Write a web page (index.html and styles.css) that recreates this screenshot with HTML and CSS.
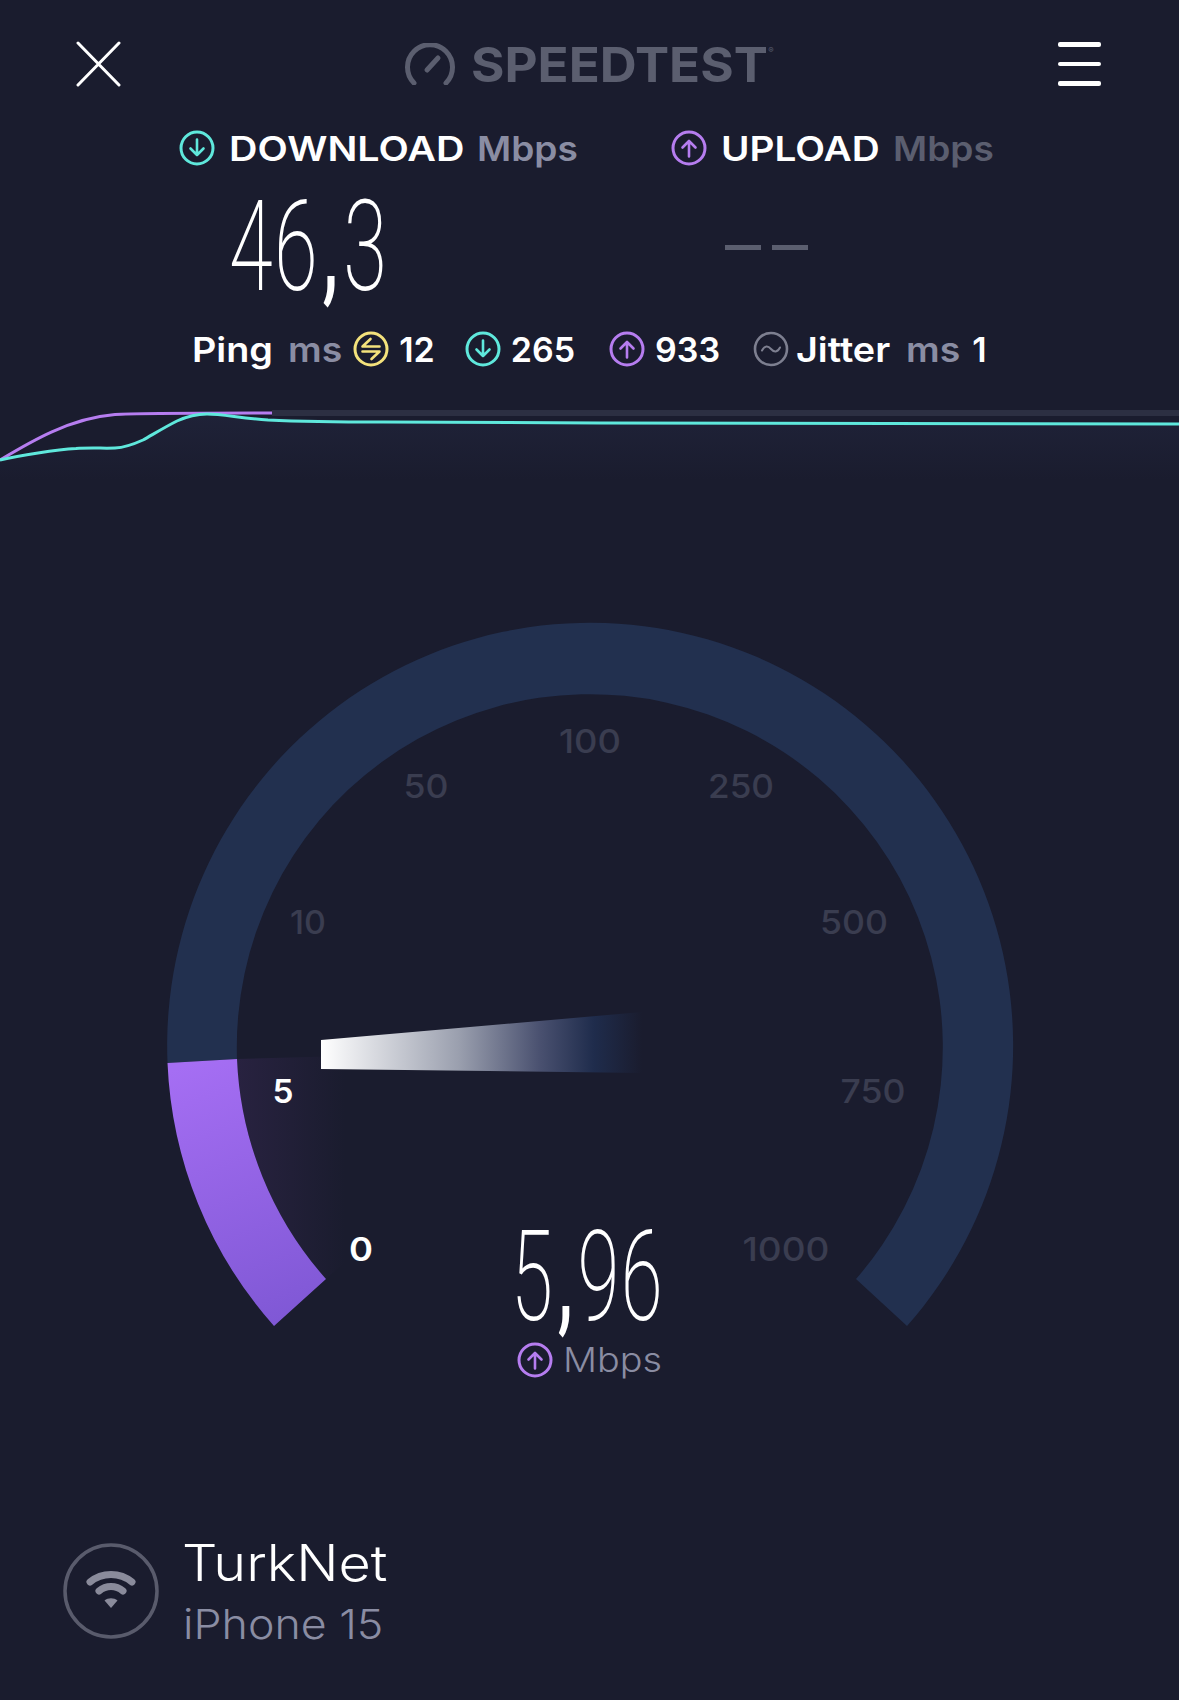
FILE: index.html
```html
<!DOCTYPE html>
<html lang="en">
  <head>
    <meta charset="UTF-8" />
    <meta name="viewport" content="width=device-width, initial-scale=1.0" />
    <title>Speedtest</title>
    <link rel="stylesheet" href="styles.css">
  </head>
  <body>
    <svg class="defs" width="0" height="0">
      <symbol id="arrow-down" viewBox="0 0 36 36">
        <circle cx="18" cy="18" r="16" fill="none" stroke="currentColor" stroke-width="3" />
        <path d="M18 9.5V25M11.5 18.5L18 25L24.5 18.5" fill="none" stroke="currentColor" stroke-width="2.6" stroke-linecap="round" stroke-linejoin="round" />
      </symbol>
      <symbol id="arrow-up" viewBox="0 0 36 36">
        <circle cx="18" cy="18" r="16" fill="none" stroke="currentColor" stroke-width="3" />
        <path d="M18 26.5V11M11.5 17.5L18 11L24.5 17.5" fill="none" stroke="currentColor" stroke-width="2.6" stroke-linecap="round" stroke-linejoin="round" />
      </symbol>
    </svg>

    <main class="screen">
      <header class="topbar">
        <svg class="close" viewBox="0 0 45 46">
          <path d="M2 2L43 44M43 2L2 44" />
        </svg>
        <div class="logo">
          <svg class="logo-mark" viewBox="0 0 50 42">
            <path d="M9 40A22.5 22.5 0 1 1 41 40" />
            <path d="M22 27L33 15" />
          </svg>
          <span class="wide logo-text">SPEEDTEST</span><span class="logo-reg">®</span>
        </div>
        <div class="menu">
          <span></span>
          <span></span>
          <span></span>
        </div>
      </header>

      <section class="results">
        <div class="result">
          <div class="result-head">
            <svg class="icon cyan"><use href="#arrow-down" /></svg>
            <span class="wide result-name name-download">DOWNLOAD</span>
            <span class="wide unit">Mbps</span>
          </div>
          <div class="result-value">
            <span class="thin-number">46<span class="comma">,</span>3</span>
          </div>
        </div>
        <div class="result">
          <div class="result-head">
            <svg class="icon purple"><use href="#arrow-up" /></svg>
            <span class="wide result-name name-upload">UPLOAD</span>
            <span class="wide unit unit-dim">Mbps</span>
          </div>
          <div class="result-value pending">
            <span class="dash"></span>
            <span class="dash"></span>
          </div>
        </div>
      </section>

      <section class="latency">
        <span class="wide lat-ping">Ping</span>
        <span class="wide lat-unit">ms</span>
        <svg class="icon yellow" viewBox="0 0 36 36">
          <circle cx="18" cy="18" r="16" fill="none" stroke="currentColor" stroke-width="3" />
          <path d="M17.5 8L9.5 15.5H26.5M9.5 20.5H26.5L18.5 28" fill="none" stroke="currentColor" stroke-width="2.6" stroke-linecap="round" stroke-linejoin="round" />
        </svg>
        <span class="lat-value val-ping">12</span>
        <svg class="icon cyan"><use href="#arrow-down" /></svg>
        <span class="lat-value val-down">265</span>
        <svg class="icon purple"><use href="#arrow-up" /></svg>
        <span class="lat-value val-up">933</span>
        <svg class="icon grey" viewBox="0 0 36 36">
          <circle cx="18" cy="18" r="16" fill="none" stroke="currentColor" stroke-width="2.6" />
          <path d="M9 19.5C11.5 14.5 15 14.5 18 18C21 21.5 24.5 21.5 27 16.5" fill="none" stroke="currentColor" stroke-width="2" stroke-linecap="round" />
        </svg>
        <span class="wide lat-jitter">Jitter</span>
        <span class="wide lat-unit">ms</span>
        <span class="lat-value val-jitter">1</span>
      </section>

      <svg class="graph" viewBox="0 400 1179 90">
        <defs>
          <linearGradient id="graph-glow" x1="0" y1="0" x2="0" y2="1">
            <stop offset="0" stop-color="#1f2238" />
            <stop offset="1" stop-color="#1a1c2e" />
          </linearGradient>
        </defs>
        <path class="graph-fill" d="M0 460C40 452 90 448 115 448C150 446 175 414 207 414C240 417 300 422 600 423L1179 424V480H0Z" />
        <rect class="graph-track" x="272" y="410" width="907" height="6" />
        <path class="graph-up" d="M0 460C30 442 70 418 115 414.5C135 413 200 413 272 413" />
        <path class="graph-down" d="M0 460C13 457 25 455 38 453C50 451 63 449 76 448.5C90 447.5 105 448.5 115 448C125 447.5 132 445 143 440C152 435 165 427 177 421C188 416 197 414 207 414C222 414 240 418 268 420C300 421.5 340 422 383 422L600 423L1179 424" />
      </svg>

      <section class="gauge">
        <svg class="gauge-dial" viewBox="0 600 1179 800">
          <defs>
            <linearGradient id="arc-fill" gradientUnits="userSpaceOnUse" x1="200" y1="1060" x2="300" y2="1326">
              <stop offset="0" stop-color="#a56ef3" />
              <stop offset="1" stop-color="#7e57d4" />
            </linearGradient>
            <linearGradient id="arc-glow" gradientUnits="userSpaceOnUse" x1="237" y1="0" x2="345" y2="0">
              <stop offset="0" stop-color="#282240" />
              <stop offset="1" stop-color="#1a1c2e" />
            </linearGradient>
            <linearGradient id="needle-fill" gradientUnits="userSpaceOnUse" x1="321" y1="0" x2="642" y2="0">
              <stop offset="0" stop-color="#ffffff" />
              <stop offset="0.43" stop-color="#9a9fae" />
              <stop offset="0.68" stop-color="#4a5170" />
              <stop offset="0.85" stop-color="#1f2c4c" />
              <stop offset="1" stop-color="#1a1c2e" />
            </linearGradient>
          </defs>
          <path class="arc-track" d="M167.5 1063A423 423 0 1 1 907 1326L856 1279A353 353 0 1 0 237 1059Z" />
          <path fill="url(#arc-glow)" d="M237 1059A353 353 0 0 0 326 1279L345 1262V1056Z" />
          <path fill="url(#arc-fill)" d="M167.5 1063A423 423 0 0 0 274 1326L326 1279A353 353 0 0 1 237 1059Z" />
          <path fill="url(#needle-fill)" d="M321 1040L642 1012V1073L321 1069Z" />
          <text class="tick" x="590" y="753" textLength="62" lengthAdjust="spacingAndGlyphs">100</text>
          <text class="tick" x="426" y="798" textLength="45" lengthAdjust="spacingAndGlyphs">50</text>
          <text class="tick" x="741" y="798" textLength="66" lengthAdjust="spacingAndGlyphs">250</text>
          <text class="tick" x="308" y="934" textLength="36" lengthAdjust="spacingAndGlyphs">10</text>
          <text class="tick" x="854" y="934" textLength="68" lengthAdjust="spacingAndGlyphs">500</text>
          <text class="tick" x="873" y="1103" textLength="65" lengthAdjust="spacingAndGlyphs">750</text>
          <text class="tick active" x="283" y="1103" textLength="21" lengthAdjust="spacingAndGlyphs">5</text>
          <text class="tick active" x="361" y="1261" textLength="24" lengthAdjust="spacingAndGlyphs">0</text>
          <text class="tick" x="786" y="1261" textLength="87" lengthAdjust="spacingAndGlyphs">1000</text>
          <use class="purple" href="#arrow-up" x="517" y="1342" width="36" height="36" />
          <text class="dial-unit" x="563" y="1372" textLength="99" lengthAdjust="spacingAndGlyphs">Mbps</text>
        </svg>
        <div class="readout">
          <span class="thin-number">5<span class="comma">,</span>96</span>
        </div>
      </section>

      <footer class="network">
        <svg class="wifi" viewBox="0 0 96 96">
          <circle cx="48" cy="48" r="46" fill="none" stroke="#595b6c" stroke-width="3.5" />
          <path class="wifi-arc" d="M27 39C39 29 57 29 69 39" />
          <path class="wifi-arc" d="M36 48C43 42 53 42 60 48" />
          <path fill="#8a8b9b" d="M41.5 57.5C45 54.5 51 54.5 54.5 57.5L48 65Z" />
        </svg>
        <div class="network-text">
          <div class="wide isp">TurkNet</div>
          <div class="wide device">iPhone 15</div>
        </div>
      </footer>
    </main>
  </body>
</html>
```

FILE: styles.css
```css
body {
  margin: 0;
  background-color: #1a1c2e;
  font-family: Inter, 'Noto Sans', sans-serif;
  color: white;
}

.defs {
  position: absolute;
}

.screen {
  width: 1179px;
  height: 1700px;
  overflow: hidden;
  display: flex;
  flex-direction: column;
}

/* the labels in the app use a wider face than Inter, margin-right makes up
   the room the stretch takes */
.wide {
  display: block;
  flex: none;
  white-space: nowrap;
  transform-origin: left center;
}

.topbar {
  height: 46px;
  margin-top: 41px;
  padding: 0 78px 0 76px;
  display: flex;
  justify-content: space-between;
  align-items: center;
}

.close {
  width: 45px;
  height: 46px;
  fill: none;
  stroke: white;
  stroke-width: 3;
  stroke-linecap: round;
}

.logo {
  display: flex;
  align-items: center;
  color: #5b5e6f;
}

.logo-mark {
  width: 50px;
  height: 42px;
  margin-right: 16px;
  fill: none;
  stroke: #5b5e6f;
  stroke-width: 5;
  stroke-linecap: round;
}

.logo-text {
  margin-right: 18px;
  font-size: 48px;
  font-weight: 700;
  transform: scaleX(1.065);
}

.logo-reg {
  align-self: flex-start;
  margin-top: 10px;
  font-size: 8px;
}

.menu {
  width: 43px;
  display: flex;
  flex-direction: column;
  gap: 15px;
}

.menu span {
  height: 4.5px;
  border-radius: 2px;
  background: white;
}

.results {
  margin-top: 43px;
  padding-left: 179px;
  display: grid;
  grid-template-columns: 492px auto;
}

.result-head {
  height: 36px;
  display: flex;
  align-items: center;
}

.icon {
  width: 36px;
  height: 36px;
  flex: none;
}

.cyan {
  color: #5fe8dc;
}

.purple {
  color: #b67df0;
}

.yellow {
  color: #f4e27c;
}

.grey {
  color: #7d7f90;
}

.result-name {
  margin-left: 14px;
  font-size: 34px;
  font-weight: 600;
}

.name-download {
  margin-right: 30px;
  transform: scaleX(1.16);
}

.name-upload {
  margin-right: 18px;
  transform: scaleX(1.14);
}

.unit {
  margin-left: 15px;
  font-size: 34px;
  font-weight: 600;
  color: #8a8da3;
  transform: scaleX(1.09);
}

.unit-dim {
  color: #5b5e6f;
}

.result-value {
  height: 93px;
  margin-top: 34px;
  padding-left: 50px;
  display: flex;
  align-items: center;
}

.pending {
  padding-left: 54px;
  padding-top: 2px;
  height: 91px;
  gap: 11px;
}

.dash {
  width: 36px;
  height: 5px;
  background: #5b5e6f;
}

/* no condensed thin face is installed, so the numbers are squeezed */
.thin-number {
  display: block;
  font-family: Roboto, sans-serif;
  font-size: 127px;
  font-weight: 200;
  line-height: 93px;
  letter-spacing: 2px;
  white-space: nowrap;
  transform: scaleX(0.625);
  transform-origin: left center;
}

.comma {
  margin: 0 6px;
  font-weight: 400;
}

.latency {
  margin-top: 38px;
  padding-left: 192px;
  height: 36px;
  display: flex;
  align-items: center;
  font-size: 34px;
  font-weight: 600;
}

.lat-ping {
  margin-right: 8px;
  transform: scaleX(1.11);
}

.lat-unit {
  margin-left: 15px;
  margin-right: 5px;
  color: #8a8da3;
  transform: scaleX(1.1);
}

.lat-unit + .icon {
  margin-left: 11px;
}

.lat-value {
  margin-left: 10px;
}

.val-ping + .icon {
  margin-left: 30px;
}

.val-down + .icon {
  margin-left: 34px;
}

.val-up + .icon {
  margin-left: 33px;
}

.lat-jitter {
  margin-left: 7px;
  margin-right: 9px;
  transform: scaleX(1.11);
}

.lat-jitter + .lat-unit {
  margin-left: 16px;
}

.val-jitter {
  margin-left: 12px;
}

.graph {
  display: block;
  width: 1179px;
  height: 90px;
  margin-top: 33px;
}

.graph-fill {
  fill: url(#graph-glow);
}

.graph-track {
  fill: #2c2f42;
}

.graph-up,
.graph-down {
  fill: none;
  stroke-width: 3;
}

.graph-up {
  stroke: #b67df0;
}

.graph-down {
  stroke: #5fe8dc;
}

.gauge {
  position: relative;
  height: 800px;
  margin-top: 110px;
}

.gauge-dial {
  display: block;
  width: 1179px;
  height: 800px;
}

.arc-track {
  fill: #22304f;
}

.tick {
  font-family: Inter, sans-serif;
  font-size: 33px;
  font-weight: 500;
  text-anchor: middle;
  fill: #3a3d50;
}

.tick.active {
  font-weight: 600;
  fill: white;
}

.readout {
  position: absolute;
  left: 511px;
  top: 630px;
}

.readout .thin-number {
  transform: scaleX(0.6);
}

.dial-unit {
  font-size: 34px;
  font-weight: 300;
  fill: #8a8da3;
}

.network {
  margin-top: 127px;
  padding-left: 63px;
  display: flex;
  align-items: center;
  gap: 23px;
}

.wifi {
  width: 96px;
  height: 96px;
}

.wifi-arc {
  fill: none;
  stroke: #8a8b9b;
  stroke-width: 7;
  stroke-linecap: round;
}

.network-text {
  padding-top: 6px;
}

.isp {
  font-size: 50px;
  font-weight: 300;
  line-height: 60px;
  transform: scaleX(1.115);
}

.device {
  padding-left: 1px;
  font-size: 41px;
  font-weight: 300;
  line-height: 62px;
  color: #8a8da3;
  transform: scaleX(1.09);
}
```
